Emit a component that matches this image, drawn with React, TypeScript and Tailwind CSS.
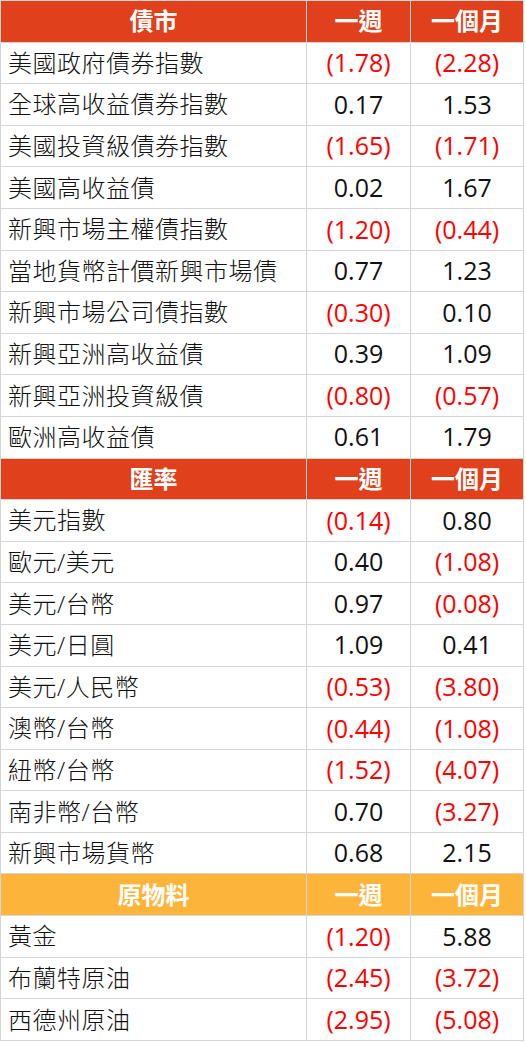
type Row = { name: string; week: string; month: string };
type Section = { title: string; tone: 'red' | 'orange'; rows: Row[] };

const sections: Section[] = [
  {
    title: '債市',
    tone: 'red',
    rows: [
      { name: '美國政府債券指數', week: '(1.78)', month: '(2.28)' },
      { name: '全球高收益債券指數', week: '0.17', month: '1.53' },
      { name: '美國投資級債券指數', week: '(1.65)', month: '(1.71)' },
      { name: '美國高收益債', week: '0.02', month: '1.67' },
      { name: '新興市場主權債指數', week: '(1.20)', month: '(0.44)' },
      { name: '當地貨幣計價新興市場債', week: '0.77', month: '1.23' },
      { name: '新興市場公司債指數', week: '(0.30)', month: '0.10' },
      { name: '新興亞洲高收益債', week: '0.39', month: '1.09' },
      { name: '新興亞洲投資級債', week: '(0.80)', month: '(0.57)' },
      { name: '歐洲高收益債', week: '0.61', month: '1.79' },
    ],
  },
  {
    title: '匯率',
    tone: 'red',
    rows: [
      { name: '美元指數', week: '(0.14)', month: '0.80' },
      { name: '歐元/美元', week: '0.40', month: '(1.08)' },
      { name: '美元/台幣', week: '0.97', month: '(0.08)' },
      { name: '美元/日圓', week: '1.09', month: '0.41' },
      { name: '美元/人民幣', week: '(0.53)', month: '(3.80)' },
      { name: '澳幣/台幣', week: '(0.44)', month: '(1.08)' },
      { name: '紐幣/台幣', week: '(1.52)', month: '(4.07)' },
      { name: '南非幣/台幣', week: '0.70', month: '(3.27)' },
      { name: '新興市場貨幣', week: '0.68', month: '2.15' },
    ],
  },
  {
    title: '原物料',
    tone: 'orange',
    rows: [
      { name: '黃金', week: '(1.20)', month: '5.88' },
      { name: '布蘭特原油', week: '(2.45)', month: '(3.72)' },
      { name: '西德州原油', week: '(2.95)', month: '(5.08)' },
    ],
  },
];

const cell = 'flex h-[41.6px] items-center border-b border-r border-[#d4d4d4]';
const headCls = `${cell} justify-center text-[24px] font-bold text-white`;
const numCls = (v: string) =>
  `${cell} justify-center text-[25px] ${v.startsWith('(') ? 'text-[#ff0000]' : 'text-[#111]'}`;

export default function App() {
  return (
    <div
      className="w-[524px] bg-white"
      style={{ fontFamily: '"Open Sans", "Noto Sans CJK TC", sans-serif' }}
    >
      <div className="grid grid-cols-[306px_104px_113px] border-l border-t border-[#d4d4d4]">
        {sections.map((s) => {
          const head = s.tone === 'red' ? 'bg-[#e0401c]' : 'bg-[#fdb43b]';
          return [
            <div key={s.title + 'h'} className={`${headCls} ${head}`}>
              {s.title}
            </div>,
            <div key={s.title + 'w'} className={`${headCls} ${head}`}>
              一週
            </div>,
            <div key={s.title + 'm'} className={`${headCls} ${head}`}>
              一個月
            </div>,
            ...s.rows.flatMap((r) => [
              <div key={r.name + 'n'} className={`${cell} pl-[7px] text-[24px] font-light tracking-[0.5px] text-[#111]`}>
                {r.name}
              </div>,
              <div key={r.name + 'w'} className={numCls(r.week)}>
                {r.week}
              </div>,
              <div key={r.name + 'm'} className={numCls(r.month)}>
                {r.month}
              </div>,
            ]),
          ];
        })}
      </div>
    </div>
  );
}
